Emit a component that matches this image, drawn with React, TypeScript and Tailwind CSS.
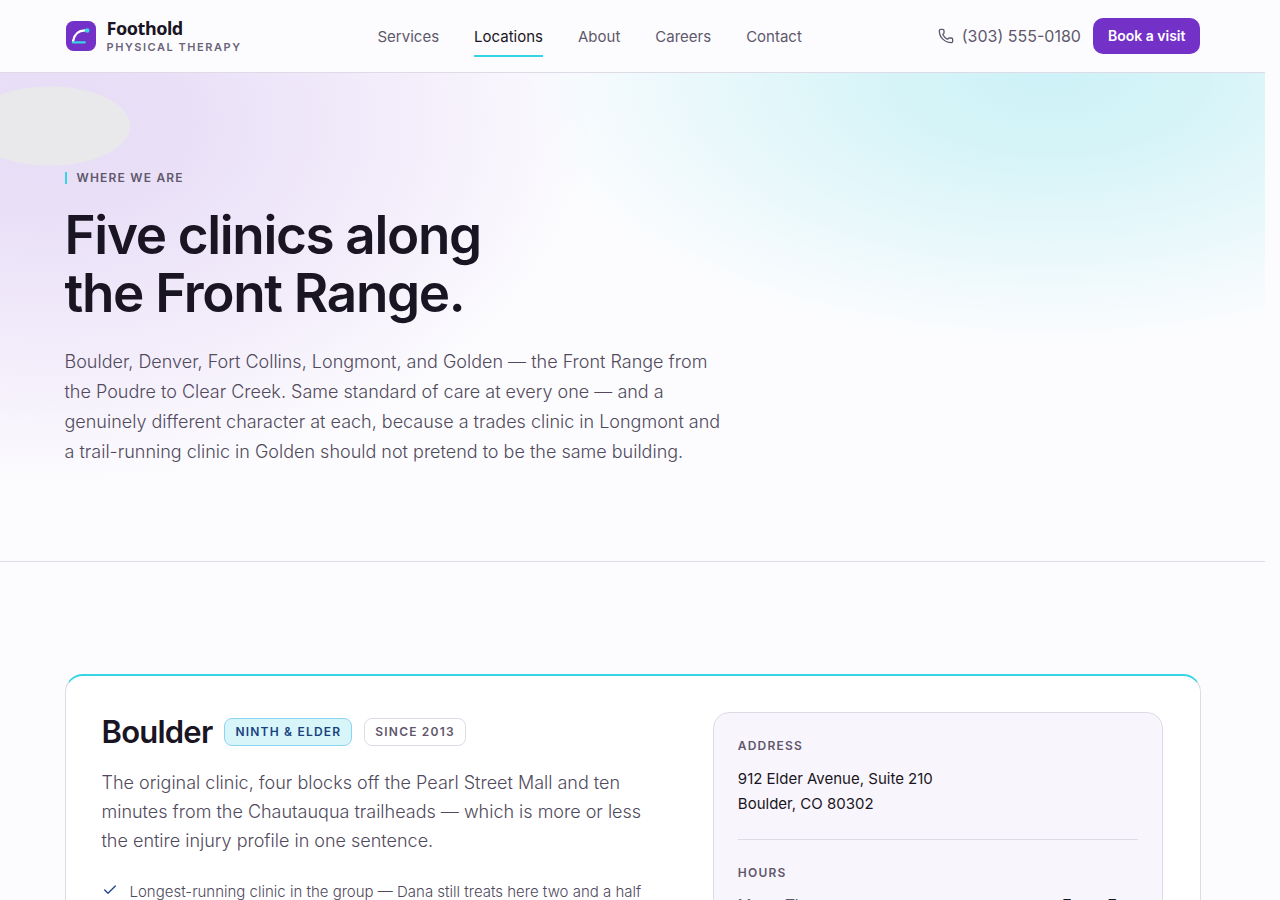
import React from "react";
import { Check, Phone } from "lucide-react";

const navItems = ["Services", "Locations", "About", "Careers", "Contact"];

function Logo() {
  return (
    <a href="#home" className="flex items-center gap-2.5">
      <svg width="32" height="32" viewBox="0 0 32 32" aria-hidden="true">
        <rect x="1" y="1" width="30" height="30" rx="7.5" fill="#7431c8" />
        <path d="M8 21.2C9.2 14.5 13 10.6 20 10.4" fill="none" stroke="#fff" strokeWidth="2.2" strokeLinecap="round" />
        <path d="M7.8 22.3H19.8" stroke="#35d5e3" strokeWidth="2.2" strokeLinecap="round" />
        <circle cx="22.2" cy="10.5" r="2.3" fill="#35d5e3" />
      </svg>
      <span className="flex flex-col pt-0.5">
        <span className="font-['Noto_Sans',sans-serif] text-lg leading-5 font-bold tracking-tight text-[#1a1523]">Foothold</span>
        <span className="text-[11px] leading-[18px] font-semibold tracking-[0.14em] text-[#6b6478]">PHYSICAL THERAPY</span>
      </span>
    </a>
  );
}

function Header() {
  return (
    <header className="border-b border-[#dedbe6]">
      <div className="mx-auto flex h-18 max-w-[1200px] items-center justify-between px-8">
        <Logo />
        <nav aria-label="Main" className="flex gap-[35px]">
          {navItems.map((item) => (
            <a
              key={item}
              href={`#${item.toLowerCase()}`}
              aria-current={item === "Locations" ? "page" : undefined}
              className={
                item === "Locations"
                  ? "mt-1 border-b-2 border-[#35d5e3] py-1.5 text-[15px] leading-6 text-[#1a1523]"
                  : "mt-1 border-b-2 border-transparent py-1.5 text-[15px] leading-6 text-[#5f586c]"
              }
            >
              {item}
            </a>
          ))}
        </nav>
        <div className="flex items-center gap-3">
          <a href="tel:3035550180" className="flex items-center gap-2 text-base text-[#5f586c]">
            <Phone size={16} strokeWidth={2} aria-hidden="true" />
            (303) 555-0180
          </a>
          <button type="button" className="h-9 rounded-[10px] bg-[#7431c8] px-[15px] text-sm font-semibold text-white">
            Book a visit
          </button>
        </div>
      </div>
    </header>
  );
}

function Hero() {
  return (
    <section className="border-b border-[#dedbe6] bg-[radial-gradient(81px_40px_at_50px_53px,#e9e8eb_98%,transparent_100%),radial-gradient(43%_75%_at_4%_10%,#e7dcf6,#e9e0f7_25%,#f3edfb_65%,transparent),radial-gradient(42%_56%_at_83%_0%,#cdf2f7,#d6f4f8_30%,#e9f8fb_65%,transparent)]">
      <div className="mx-auto max-w-[1200px] px-8 pt-[99px] pb-[94px]">
        <p className="border-l-2 border-[#35d5e3] pl-2.5 text-xs leading-3 font-semibold tracking-widest text-[#5f586c]">
          WHERE WE ARE
        </p>
        <h1 className="mt-[22px] text-[53px] leading-[58px] font-semibold tracking-tight text-[#1a1523]">
          Five clinics along
          <br />
          the Front Range.
        </h1>
        <p className="mt-[25px] max-w-[680px] text-lg leading-[30px] font-light text-[#504a5c]">
          Boulder, Denver, Fort Collins, Longmont, and Golden — the Front Range from
          <br />
          the Poudre to Clear Creek. Same standard of care at every one — and a
          <br />
          genuinely different character at each, because a trades clinic in Longmont and
          <br />
          a trail-running clinic in Golden should not pretend to be the same building.
        </p>
      </div>
    </section>
  );
}

function ClinicCard() {
  return (
    <article className="grid grid-cols-[1.25fr_1fr] gap-12 rounded-[18px] border border-t-2 border-[#dedbe6] border-t-[#35d5e3] bg-white p-9">
      <div>
        <div className="flex items-center gap-3">
          <h2 className="text-[31px] leading-10 font-semibold tracking-tight text-[#1a1523]">Boulder</h2>
          <span className="rounded-lg border border-[#8bd4f4] bg-[#d8f6fa] px-2.5 py-1 text-xs leading-[18px] font-semibold tracking-widest text-[#17417e]">
            NINTH &amp; ELDER
          </span>
          <span className="rounded-lg border border-[#dedbe6] px-2.5 py-1 text-xs leading-[18px] font-semibold tracking-widest text-[#5f586c]">
            SINCE 2013
          </span>
        </div>
        <p className="mt-4 text-lg leading-[29px] font-light text-[#504a5c]">
          The original clinic, four blocks off the Pearl Street Mall and ten
          <br />
          minutes from the Chautauqua trailheads — which is more or less
          <br />
          the entire injury profile in one sentence.
        </p>
        <ul className="mt-[25px]">
          <li className="flex gap-3 text-[15px] leading-6 font-light text-[#504a5c]">
            <Check size={16} strokeWidth={2} className="mt-0.5 shrink-0 text-[#24458f]" aria-hidden="true" />
            Longest-running clinic in the group — Dana still treats here two and a half
          </li>
        </ul>
      </div>
      <aside className="rounded-2xl border border-[#dedbe6] bg-[#f8f5fc] p-6">
        <h3 className="text-xs leading-[18px] font-semibold tracking-widest text-[#5f586c]">ADDRESS</h3>
        <address className="mt-[11px] text-[15px] leading-[25px] text-[#1a1523] not-italic">
          912 Elder Avenue, Suite 210
          <br />
          Boulder, CO 80302
        </address>
        <div className="mt-[23px] border-t border-[#dedbe6] pt-6">
          <h3 className="text-xs leading-[18px] font-semibold tracking-widest text-[#5f586c]">HOURS</h3>
          <dl className="mt-[11px] flex justify-between text-[15px] leading-6">
            <dt className="text-[#5f586c]">Mon – Thu</dt>
            <dd className="font-medium text-[#1a1523]">7am – 7pm</dd>
          </dl>
        </div>
      </aside>
    </article>
  );
}

export default function App() {
  return (
    <div className="min-h-screen bg-[#fcfcfe] pr-[15px] font-['Inter',sans-serif]">
      <Header />
      <main>
        <Hero />
        <section className="mx-auto max-w-[1200px] px-8 py-28">
          <ClinicCard />
        </section>
      </main>
    </div>
  );
}
